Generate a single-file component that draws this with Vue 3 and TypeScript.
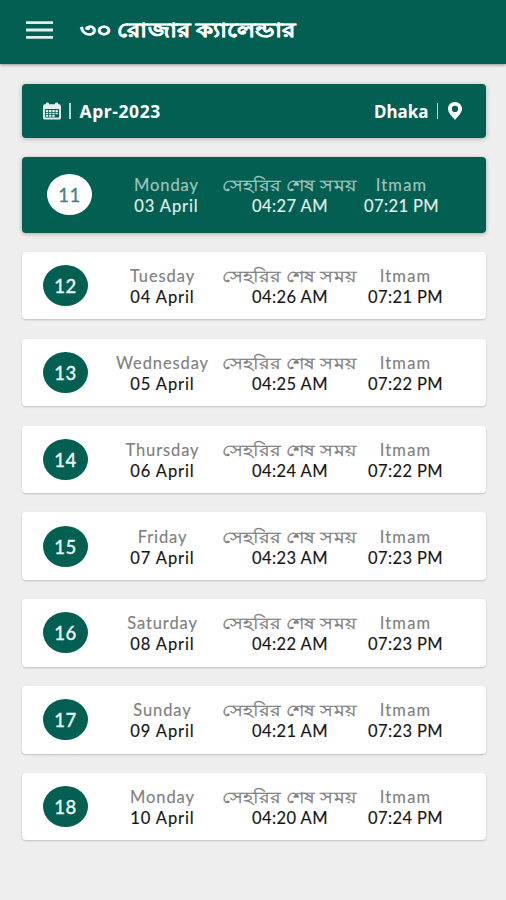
<script setup lang="ts">
interface Day {
  roza: number
  weekday: string
  date: string
  sehri: string
  iftar: string
}

const days: Day[] = [
  { roza: 11, weekday: 'Monday', date: '03 April', sehri: '04:27 AM', iftar: '07:21 PM' },
  { roza: 12, weekday: 'Tuesday', date: '04 April', sehri: '04:26 AM', iftar: '07:21 PM' },
  { roza: 13, weekday: 'Wednesday', date: '05 April', sehri: '04:25 AM', iftar: '07:22 PM' },
  { roza: 14, weekday: 'Thursday', date: '06 April', sehri: '04:24 AM', iftar: '07:22 PM' },
  { roza: 15, weekday: 'Friday', date: '07 April', sehri: '04:23 AM', iftar: '07:23 PM' },
  { roza: 16, weekday: 'Saturday', date: '08 April', sehri: '04:22 AM', iftar: '07:23 PM' },
  { roza: 17, weekday: 'Sunday', date: '09 April', sehri: '04:21 AM', iftar: '07:23 PM' },
  { roza: 18, weekday: 'Monday', date: '10 April', sehri: '04:20 AM', iftar: '07:24 PM' },
]
const today = 11
</script>

<template>
  <div class="screen">
    <header class="topbar">
      <svg class="menu" viewBox="0 0 27 18" aria-hidden="true">
        <path d="M0 1.7H27M0 9H27M0 16.3H27" />
      </svg>
      <h1 class="title" lang="bn">৩০ রোজার ক্যালেন্ডার</h1>
    </header>
    <main class="content">
      <section class="month">
        <svg class="calendar" viewBox="0 0 19 18" aria-hidden="true">
          <path
            fill-rule="evenodd"
            d="M2 2H3V1.2Q3 0 4.7 0T6.3 1.2V2H12.7V1.2Q12.7 0 14.3 0T16 1.2V2H17Q19 2 19 4V16Q19 18 17 18H2Q0 18 0 16V4Q0 2 2 2ZM2 7V15.8H17V7Z"
          />
          <path d="M3 8h2.5v2H3zM6.4 8h2.5v2H6.4zM9.8 8h2.5v2H9.8zM13.2 8h2.5v2h-2.5zM3 10.8h2.5v1.7H3zM6.4 10.8h2.5v1.7H6.4zM9.8 10.8h2.5v1.7H9.8zM13.2 10.8h2.5v1.7h-2.5zM3 13.3h2.5V15H3zM6.4 13.3h2.5V15H6.4zM9.8 13.3h2.5V15H9.8z" />
        </svg>
        <span class="divider"></span>
        <span class="month-name">Apr-2023</span>
        <span class="city">Dhaka</span>
        <span class="divider"></span>
        <svg class="pin" viewBox="0 0 14 18" aria-hidden="true">
          <path
            fill-rule="evenodd"
            d="M7 0C11 0 14 3 14 6.8C14 10.7 10.6 13.6 7 18C3.4 13.6 0 10.7 0 6.8C0 3 3 0 7 0ZM7 3.8A3.1 3.1 0 1 0 7 10A3.1 3.1 0 1 0 7 3.8Z"
          />
        </svg>
      </section>
      <article v-for="day in days" :key="day.roza" class="day" :class="{ active: day.roza === today }">
        <span class="badge">{{ day.roza }}</span>
        <div class="cell date">
          <span class="label">{{ day.weekday }}</span>
          <span class="value">{{ day.date }}</span>
        </div>
        <div class="cell sehri">
          <span class="label bangla" lang="bn">সেহরির শেষ সময়</span>
          <span class="value">{{ day.sehri }}</span>
        </div>
        <div class="cell iftar">
          <span class="label">Itmam</span>
          <span class="value">{{ day.iftar }}</span>
        </div>
      </article>
    </main>
  </div>
</template>

<style>
body {
  background: #eee;
}
</style>

<style scoped>
.screen {
  height: 900px;
  overflow: hidden;
  background: #eee;
  font-family: "Noto Sans", "Open Sans", sans-serif;
}
.topbar {
  box-sizing: border-box;
  height: 64px;
  padding: 0 26px 5px;
  display: flex;
  align-items: center;
  gap: 27px;
  background: #025f52;
  box-shadow: 0 1px 3px rgba(0, 0, 0, 0.4);
}
.menu {
  width: 27px;
  height: 18px;
  stroke: #e2eeeb;
  stroke-width: 2.8;
}
.title {
  margin: 0;
  color: #fff;
  font-size: 20px;
  font-weight: 700;
  line-height: 30px;
  white-space: nowrap;
  word-spacing: -0.8px;
  transform: scaleX(1.22);
  transform-origin: left center;
  -webkit-text-stroke: 0.4px #fff;
}
.content {
  padding: 20px 20px 0 22px;
}
.month {
  box-sizing: border-box;
  height: 54px;
  margin-bottom: 19px;
  padding: 0 24px 0 21px;
  display: flex;
  align-items: center;
  border-radius: 4px;
  background: #025f52;
  box-shadow: 0 1px 5px rgba(0, 0, 0, 0.25);
  color: #fff;
  font-size: 17.5px;
  font-weight: 700;
}
.month-name {
  letter-spacing: 0.6px;
}
.calendar {
  width: 18px;
  height: 18px;
  fill: #e2f0ec;
}
.divider {
  width: 1.5px;
  height: 16px;
  margin: 0 9px 0 8px;
  background: #b9d4ce;
}
.city {
  margin-left: auto;
  font-size: 17px;
}
.month .city + .divider {
  margin-right: 10px;
}
.pin {
  width: 14px;
  height: 18px;
  fill: #fff;
}
.day {
  box-sizing: border-box;
  height: 67.5px;
  margin-bottom: 19.35px;
  padding-left: 21px;
  display: grid;
  grid-template-columns: 45px 149px 106px 125px;
  align-items: center;
  border-radius: 4px;
  background: #fff;
  box-shadow: 0 1px 2px rgba(0, 0, 0, 0.2);
  font-family: Lato, "Noto Sans", sans-serif;
}
.active {
  height: 75.5px;
  padding-left: 25px;
  grid-template-columns: 45px 149px 98px 125px;
  background: #025f52;
  box-shadow: 0 1px 4px rgba(0, 0, 0, 0.3);
}
.badge {
  width: 45px;
  height: 41px;
  border-radius: 50%;
  background: #025f52;
  color: #e8f3f0;
  font-size: 18.5px;
  font-weight: 500;
  letter-spacing: 0.5px;
  line-height: 42px;
  text-align: center;
  -webkit-text-stroke: 0.3px currentColor;
}
.active .badge {
  background: #fff;
  color: #3f8478;
  font-weight: 400;
}
.cell {
  display: flex;
  flex-direction: column;
  align-items: center;
  padding-top: 3px;
  white-space: nowrap;
  font-size: 16.5px;
  line-height: 21px;
  letter-spacing: 0.9px;
  -webkit-text-stroke: 0.15px currentColor;
}
.label {
  color: #808080;
}
.value {
  color: #151515;
  letter-spacing: 0.4px;
}
.date .value {
  letter-spacing: 0.9px;
}
.iftar .label {
  letter-spacing: 1.2px;
}
.bangla {
  font-size: 16px;
  letter-spacing: 0;
  transform: translate(-0.5px, -1.5px) scaleX(1.22);
  -webkit-text-stroke-width: 0.3px;
}
.active .label {
  color: #a3c5bd;
}
.active .value {
  color: #e3f0ed;
}
</style>
